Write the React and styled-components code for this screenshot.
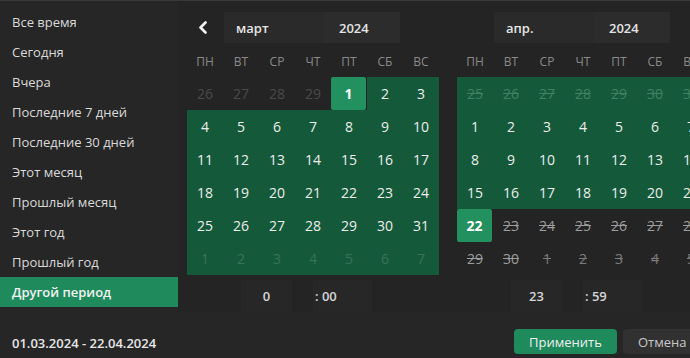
import React from 'react';
import styled, { createGlobalStyle } from 'styled-components';

const Global = createGlobalStyle`
  html, body { margin: 0; padding: 0; background: #262626; overflow: hidden; }
  body { font-family: "Open Sans", "Noto Sans", sans-serif; }
`;

const Root = styled.div`
  width: 718px;
  height: 358px;
  box-sizing: border-box;
  border-top: 1px solid #383838;
  background: #262626;
  display: flex;
  flex-direction: column;
  color: #e2e2e2;
`;

const Main = styled.div`
  display: flex;
  height: 311px;
`;

const Sidebar = styled.ul`
  width: 178px;
  flex: none;
  margin: 0;
  padding: 6px 0 0;
  list-style: none;
`;

const Preset = styled.li`
  height: 30px;
  display: flex;
  align-items: center;
  padding-left: 12px;
  font-size: 13px;
  color: ${(p) => (p.$active ? '#f2f2f2' : '#dadada')};
  background: ${(p) => (p.$active ? '#1f8a5c' : 'transparent')};
  font-weight: ${(p) => (p.$active ? 600 : 400)};
`;

const Calendars = styled.div`
  display: flex;
  gap: 18px;
  padding-left: 9px;
  background: #242424;
`;

const Calendar = styled.div`
  width: 252px;
  display: flex;
  flex-direction: column;
`;

const Header = styled.div`
  margin-top: 11px;
  height: 31px;
  display: flex;
  align-items: stretch;
`;

const NavButton = styled.div`
  width: 37px;
  padding-right: 5px;
  box-sizing: border-box;
  display: flex;
  align-items: center;
  justify-content: center;
  visibility: ${(p) => (p.$hidden ? 'hidden' : 'visible')};
`;

const Select = styled.div`
  width: ${(p) => p.$w}px;
  padding-left: ${(p) => p.$pl}px;
  box-sizing: border-box;
  background: ${(p) => p.$bg};
  display: flex;
  align-items: center;
  font-size: 13px;
  font-weight: 600;
  color: #e4e4e4;
`;

const Weekdays = styled.div`
  margin-top: 7px;
  height: 22px;
  display: grid;
  grid-template-columns: repeat(7, 36px);
  align-items: center;
  font-size: 12px;
  color: #8a8a8a;
  text-align: center;
`;

const Days = styled.div`
  margin-top: 5px;
  display: grid;
  grid-template-columns: repeat(7, 36px);
  grid-auto-rows: 33px;
`;

const colorFor = (k) => {
  if (k.sel) return '#ffffff';
  if (k.out && k.range) return k.strike ? '#3f8062' : '#3a7257';
  if (k.out && k.disabled) return '#7c7c7c';
  if (k.out) return '#4a4a4a';
  if (k.disabled) return '#9c9c9c';
  return '#ededed';
};

const DayWrap = styled.div`
  background: ${(p) => (p.$k.range ? '#145a3a' : 'transparent')};
  display: flex;
`;

const Day = styled.div`
  flex: 1;
  margin-right: ${(p) => (p.$k.sel ? 1 : 0)}px;
  border-radius: ${(p) => (p.$k.sel ? 2 : 0)}px;
  background: ${(p) => (p.$k.sel ? '#22905f' : 'transparent')};
  display: flex;
  align-items: center;
  justify-content: center;
  font-size: 14px;
  font-weight: ${(p) => (p.$k.sel ? 700 : 400)};
  color: ${(p) => colorFor(p.$k)};
  text-decoration: ${(p) => (p.$k.strike ? 'line-through' : 'none')};
`;

const TimeRow = styled.div`
  margin-top: 5px;
  height: 32px;
  display: flex;
`;

const TimeBox = styled.div`
  margin-left: ${(p) => p.$ml}px;
  width: ${(p) => p.$w}px;
  padding-left: ${(p) => p.$pl || 0}px;
  box-sizing: border-box;
  background: #272727;
  display: flex;
  align-items: center;
  justify-content: ${(p) => (p.$center ? 'center' : 'flex-start')};
  font-size: 13px;
  font-weight: 600;
  color: #d6d6d6;
`;

const Footer = styled.div`
  height: 46px;
  box-sizing: border-box;
  padding: 17px 9px 4px 12px;
  display: flex;
  align-items: center;
`;

const RangeText = styled.div`
  margin-top: 3px;
  font-size: 13px;
  font-weight: 600;
  color: #e6e6e6;
`;

const Actions = styled.div`
  margin-left: auto;
  display: flex;
  gap: 6px;
  height: 25px;
`;

const Button = styled.button`
  width: ${(p) => p.$w}px;
  height: 25px;
  border: none;
  border-radius: 4px;
  font-family: inherit;
  font-size: 13px;
  padding: 0 0 0 ${(p) => (p.$primary ? 0 : 15)}px;
  text-align: ${(p) => (p.$primary ? 'center' : 'left')};
  background: ${(p) => (p.$primary ? '#1f8a5c' : '#313131')};
  color: ${(p) => (p.$primary ? '#f0f0f0' : '#c8c8c8')};
`;

const presets = [
  'Все время',
  'Сегодня',
  'Вчера',
  'Последние 7 дней',
  'Последние 30 дней',
  'Этот месяц',
  'Прошлый месяц',
  'Этот год',
  'Прошлый год',
  'Другой период',
];

const weekdays = ['ПН', 'ВТ', 'СР', 'ЧТ', 'ПТ', 'СБ', 'ВС'];

const marchDays = [
  ...[26, 27, 28, 29].map((d) => ({ d, out: true })),
  { d: 1, sel: true },
  ...Array.from({ length: 30 }, (_, i) => ({ d: i + 2, range: true })),
  ...[1, 2, 3, 4, 5, 6, 7].map((d) => ({ d, out: true, range: true })),
];

const aprilDays = [
  ...[25, 26, 27, 28, 29, 30, 31].map((d) => ({ d, out: true, range: true, strike: true })),
  ...Array.from({ length: 21 }, (_, i) => ({ d: i + 1, range: true })),
  { d: 22, sel: true },
  ...Array.from({ length: 8 }, (_, i) => ({ d: i + 23, disabled: true, strike: true })),
  ...[1, 2, 3, 4, 5].map((d) => ({ d, out: true, disabled: true, strike: true })),
];

const Chevron = () => (
  <svg width="10" height="13" viewBox="0 0 10 13">
    <polyline points="7.5,1.5 2.5,6.5 7.5,11.5" fill="none" stroke="#f2f2f2" strokeWidth="2.6" strokeLinecap="round" strokeLinejoin="round" />
  </svg>
);

const Month = ({ name, days, hour, minute, showPrev }) => (
  <Calendar>
    <Header>
      <NavButton $hidden={!showPrev}>
        <Chevron />
      </NavButton>
      <Select $w={100} $pl={12} $bg="#2a2a2a">{name}</Select>
      <Select $w={76} $pl={15} $bg="#2c2c2c">2024</Select>
    </Header>
    <Weekdays>
      {weekdays.map((w) => (
        <span key={w}>{w}</span>
      ))}
    </Weekdays>
    <Days>
      {days.map((k, i) => (
        <DayWrap key={i} $k={k}>
          <Day $k={k}>{k.d}</Day>
        </DayWrap>
      ))}
    </Days>
    <TimeRow>
      <TimeBox $ml={54} $w={51} $center>{hour}</TimeBox>
      <TimeBox $ml={21} $w={59} $pl={2}>{`: ${minute}`}</TimeBox>
    </TimeRow>
  </Calendar>
);

export default function App() {
  return (
    <>
      <Global />
      <Root>
        <Main>
          <Sidebar>
            {presets.map((p, i) => (
              <Preset key={p} $active={i === presets.length - 1}>
                {p}
              </Preset>
            ))}
          </Sidebar>
          <Calendars>
            <Month name="март" days={marchDays} hour="0" minute="00" showPrev />
            <Month name="апр." days={aprilDays} hour="23" minute="59" />
          </Calendars>
        </Main>
        <Footer>
          <RangeText>01.03.2024 - 22.04.2024</RangeText>
          <Actions>
            <Button $primary $w={103}>Применить</Button>
            <Button $w={86}>Отмена</Button>
          </Actions>
        </Footer>
      </Root>
    </>
  );
}
